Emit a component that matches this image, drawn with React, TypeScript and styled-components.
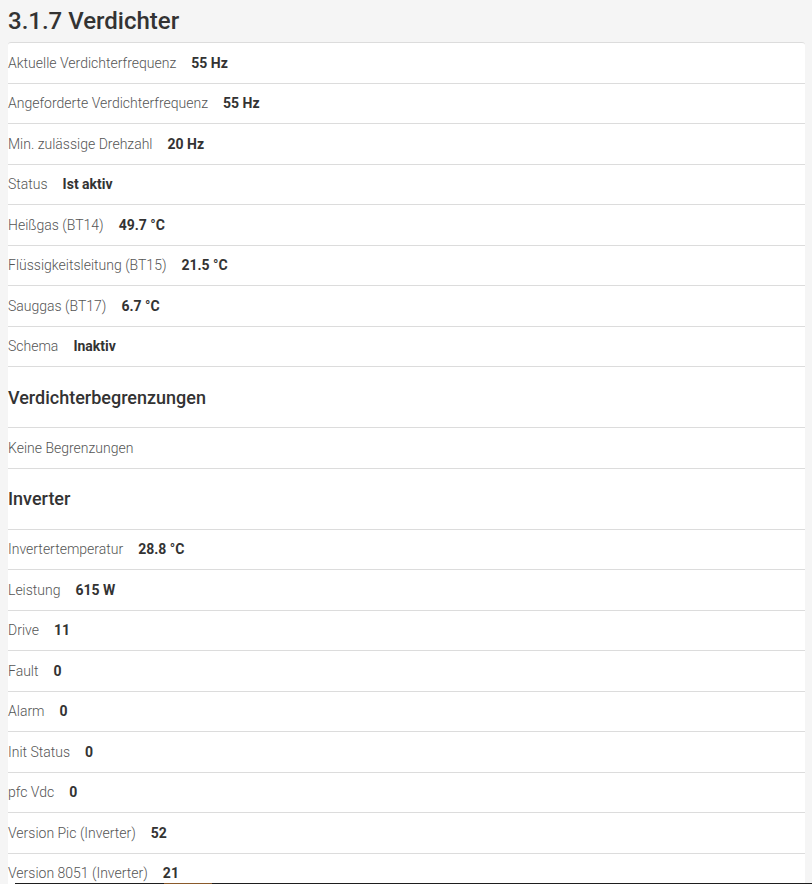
import React from "react";
import styled, { createGlobalStyle } from "styled-components";

const GlobalStyle = createGlobalStyle`
  html, body {
    margin: 0;
    padding: 0;
    background: #f5f5f5;
    font-family: Roboto, "Liberation Sans", Arial, sans-serif;
    color: #333;
  }
  body {
    padding: 0 7px 0 8px;
  }
`;

const Page = styled.div`
  display: flex;
  flex-direction: column;
`;

const Title = styled.h1`
  margin: 0;
  height: 42px;
  display: flex;
  align-items: center;
  font-size: 24px;
  font-weight: 500;
  color: #333;
  line-height: 1;
  padding-bottom: 1px;
  box-sizing: border-box;
`;

const Card = styled.div`
  background: #fff;
  border-top: 1px solid #dcdcdc;
  border-radius: 3px 3px 0 0;
  display: flex;
  flex-direction: column;
`;

const Row = styled.div`
  display: flex;
  align-items: center;
  gap: 15px;
  height: 40.5px;
  box-sizing: border-box;
  border-bottom: 1px solid #dcdcdc;
  font-size: 14px;
  line-height: 20px;
`;

const Label = styled.span`
  font-weight: 300;
  color: #555;
`;

const Value = styled.span`
  font-weight: 700;
  color: #333;
`;

const SectionHeading = styled.h2`
  margin: 0;
  height: 61px;
  box-sizing: border-box;
  display: flex;
  align-items: center;
  border-bottom: 1px solid #dcdcdc;
  font-size: 18px;
  font-weight: 500;
  color: #333;
`;

const BottomBar = styled.div`
  position: fixed;
  left: 15px;
  right: 0;
  bottom: 0;
  height: 1px;
  background: #1e1e1e;
  display: flex;
`;

const BarAccent = styled.span`
  margin-left: 149px;
  width: 48px;
  background: #8a5a2b;
`;

type Item = { label: string; value?: string };

const main: Item[] = [
  { label: "Aktuelle Verdichterfrequenz", value: "55 Hz" },
  { label: "Angeforderte Verdichterfrequenz", value: "55 Hz" },
  { label: "Min. zulässige Drehzahl", value: "20 Hz" },
  { label: "Status", value: "Ist aktiv" },
  { label: "Heißgas (BT14)", value: "49.7 °C" },
  { label: "Flüssigkeitsleitung (BT15)", value: "21.5 °C" },
  { label: "Sauggas (BT17)", value: "6.7 °C" },
  { label: "Schema", value: "Inaktiv" },
];

const limits: Item[] = [{ label: "Keine Begrenzungen" }];

const inverter: Item[] = [
  { label: "Invertertemperatur", value: "28.8 °C" },
  { label: "Leistung", value: "615 W" },
  { label: "Drive", value: "11" },
  { label: "Fault", value: "0" },
  { label: "Alarm", value: "0" },
  { label: "Init Status", value: "0" },
  { label: "pfc Vdc", value: "0" },
  { label: "Version Pic (Inverter)", value: "52" },
  { label: "Version 8051 (Inverter)", value: "21" },
];

const Rows = ({ items }: { items: Item[] }) => (
  <>
    {items.map((it) => (
      <Row key={it.label}>
        <Label>{it.label}</Label>
        {it.value && <Value>{it.value}</Value>}
      </Row>
    ))}
  </>
);

export default function App() {
  return (
    <Page>
      <GlobalStyle />
      <Title>3.1.7 Verdichter</Title>
      <Card>
        <Rows items={main} />
        <SectionHeading>Verdichterbegrenzungen</SectionHeading>
        <Rows items={limits} />
        <SectionHeading>Inverter</SectionHeading>
        <Rows items={inverter} />
      </Card>
      <BottomBar>
        <BarAccent />
      </BottomBar>
    </Page>
  );
}
